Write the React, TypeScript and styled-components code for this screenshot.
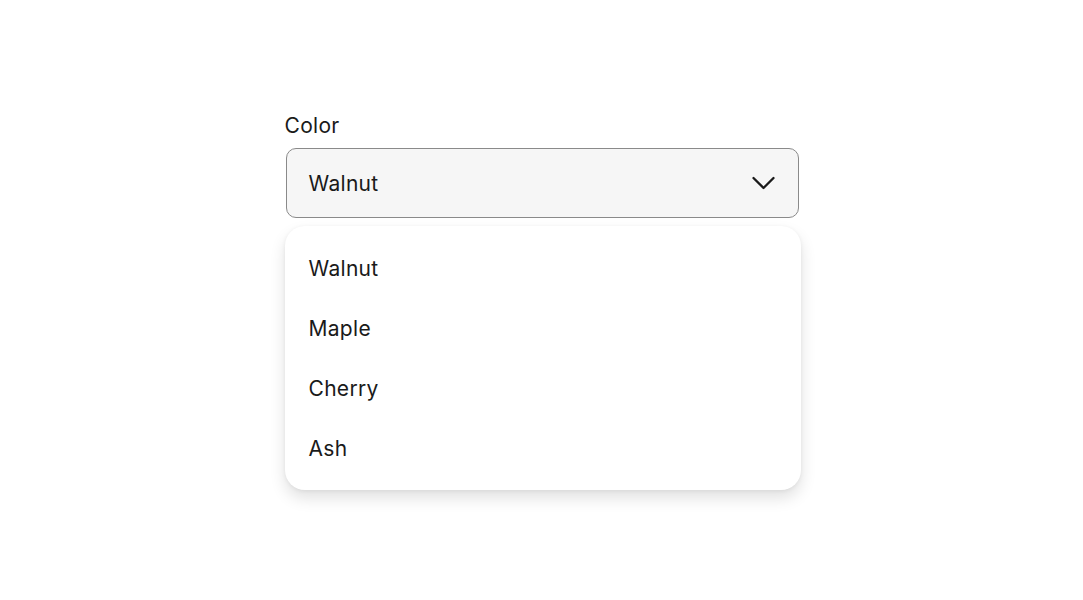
import React, { useState } from "react"
import styled, { createGlobalStyle } from "styled-components"

const options = ["Walnut", "Maple", "Cherry", "Ash"]

export default function App() {
    const [value, setValue] = useState("Walnut")
    const [open, setOpen] = useState(true)
    return (
        <>
            <GlobalStyle />
            <Page>
                <Field>
                    <Label>Color</Label>
                    <Trigger onClick={() => setOpen(!open)}>
                        <span>{value}</span>
                        <Chevron />
                    </Trigger>
                    {open && (
                        <Menu>
                            {options.map(o => (
                                <Option key={o} onClick={() => { setValue(o); setOpen(false) }}>
                                    {o}
                                </Option>
                            ))}
                        </Menu>
                    )}
                </Field>
            </Page>
        </>
    )
}

const Chevron = () => (
    <svg width="23" height="14" viewBox="0 0 23 14" fill="none">
        <path d="M1.5 2l10 10 10-10" stroke="#1a1a1a" strokeWidth="2.3" strokeLinecap="round" strokeLinejoin="round" />
    </svg>
)

const GlobalStyle = createGlobalStyle`
    body {
        margin: 0;
        background: #ffffff;
        font-family: Inter, "Noto Sans", sans-serif;
        color: #1a1a1a;
    }
`

const Page = styled.div`
    width: 100vw;
    height: 100vh;
    display: flex;
    justify-content: center;
    padding: 113px 0 0 2px;
    box-sizing: border-box;
`

const Field = styled.div`
    width: 516px;
    display: flex;
    flex-direction: column;
`

const Label = styled.label`
    font-size: 21px;
    line-height: 25px;
    margin-bottom: 10px;
    letter-spacing: 0.3px;
`

const Trigger = styled.button`
    margin: 0 2px 0 1px;
    height: 70px;
    display: flex;
    align-items: center;
    justify-content: space-between;
    padding: 0 23px 0 22px;
    background: #f6f6f6;
    border: 1px solid #8a8a8a;
    border-radius: 10px;
    font-family: inherit;
    font-size: 21px;
    color: #1a1a1a;
    cursor: pointer;
    letter-spacing: 0.3px;
`

const Menu = styled.ul`
    list-style: none;
    margin: 8px 0 0;
    padding: 12px 0;
    background: #ffffff;
    border-radius: 20px;
    box-shadow: 0 8px 16px rgba(0, 0, 0, 0.12), 0 1px 4px rgba(0, 0, 0, 0.06);
`

const Option = styled.li`
    height: 60px;
    display: flex;
    align-items: center;
    padding: 0 24px;
    font-size: 21px;
    cursor: pointer;
    letter-spacing: 0.3px;
`
